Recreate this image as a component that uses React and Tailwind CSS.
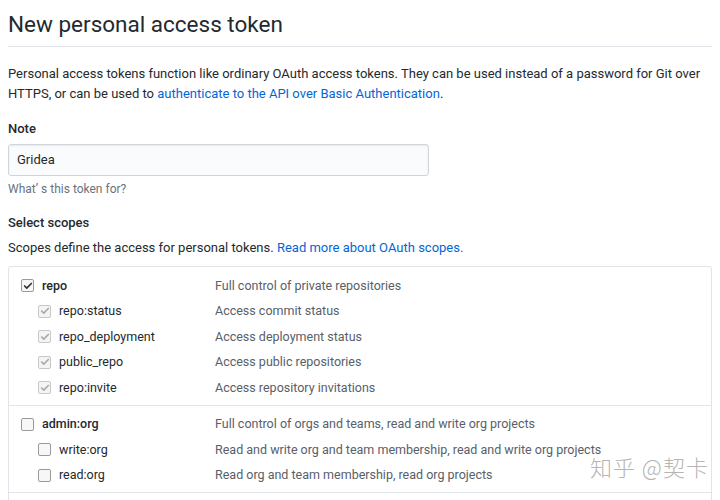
import { Check } from "lucide-react";

const scopeGroups = [
  {
    name: "repo",
    desc: "Full control of private repositories",
    checked: true,
    children: [
      { name: "repo:status", desc: "Access commit status" },
      { name: "repo_deployment", desc: "Access deployment status" },
      { name: "public_repo", desc: "Access public repositories" },
      { name: "repo:invite", desc: "Access repository invitations" },
    ],
  },
  {
    name: "admin:org",
    desc: "Full control of orgs and teams, read and write org projects",
    checked: false,
    children: [
      { name: "write:org", desc: "Read and write org and team membership, read and write org projects" },
      { name: "read:org", desc: "Read org and team membership, read org projects" },
    ],
  },
];

const Box = ({ checked, disabled }) => (
  <span
    className={`w-[13px] h-[13px] rounded-[2px] border flex items-center justify-center ${
      disabled ? "border-[#c8c8c8] bg-[#f4f4f4]" : "border-[#9a9a9a] bg-[#f7f7f7]"
    }`}
  >
    {checked && (
      <Check
        strokeWidth={4}
        className={`w-[10px] h-[10px] ${disabled ? "text-[#a9a9a9]" : "text-[#333]"}`}
      />
    )}
  </span>
);

const ScopeRow = ({ name, desc, checked, disabled, child }) => (
  <div className="flex items-center h-[25.5px] text-[12.5px]">
    <div className={`flex items-center w-[206px] ${child ? "pl-[29px]" : "pl-[12px]"}`}>
      <Box checked={checked} disabled={disabled} />
      <span className={`ml-[8px] ${child ? "" : "font-medium"} text-[#24292e]`}>{name}</span>
    </div>
    <span className="text-[#586069]">{desc}</span>
  </div>
);

const App = () => {
  return (
    <div
      className="relative w-[720px] h-[500px] overflow-hidden bg-white text-[13px] leading-[20px] text-[#24292e] px-2"
      style={{ fontFamily: 'Roboto, "Noto Sans CJK SC", sans-serif' }}
    >
      {/**header */}
      <h1 className="text-[22.5px] leading-[30px] pt-[9px] pb-[7px] border-b border-[#e1e4e8] text-[#24292e]">
        New personal access token
      </h1>

      <p className="mt-[17px]">
        Personal access tokens function like ordinary OAuth access tokens. They can be used instead of a password for Git over HTTPS, or can be used to{" "}
        <span className="text-[#0366d6]">authenticate to the API over Basic Authentication</span>.
      </p>

      {/**note */}
      <div className="mt-[15px]">
        <div className="font-medium">Note</div>
        <div className="mt-[5px] w-[421px] h-[32px] border border-[#d1d5da] rounded-[3px] bg-[#fafbfc] shadow-[inset_0_1px_2px_rgba(27,31,35,0.075)] px-[8px] flex items-center">
          Gridea
        </div>
        <div className="mt-[5px] text-[12px] leading-[16px] text-[#6a737d]">What’ s this token for?</div>
      </div>

      {/**scopes */}
      <div className="mt-[16px]">
        <div className="font-medium">Select scopes</div>
        <p className="mt-[5px]">
          Scopes define the access for personal tokens.{" "}
          <span className="text-[#0366d6]">Read more about OAuth scopes.</span>
        </p>
        <div className="mt-[8px] border border-[#e1e4e8] rounded-[3px]">
          {scopeGroups.map((group, idx) => (
            <div
              key={`group-${idx}`}
              className={`pt-[6px] pb-[4px] ${idx > 0 ? "border-t border-[#e1e4e8]" : ""}`}
            >
              <ScopeRow name={group.name} desc={group.desc} checked={group.checked} />
              {group.children.map((c) => (
                <ScopeRow
                  key={c.name}
                  name={c.name}
                  desc={c.desc}
                  checked={group.checked}
                  disabled={group.checked}
                  child
                />
              ))}
            </div>
          ))}
          <div className="border-t border-[#e1e4e8] h-[20px]" />
        </div>
      </div>

      {/**watermark */}
      <div
        className="absolute left-[590px] top-[452px] text-[22px] leading-[28px] text-[#b5b5b5] tracking-[1px] font-light"
        style={{ fontFamily: '"Noto Sans CJK SC", sans-serif' }}
      >
        知乎 @契卡
      </div>
    </div>
  );
};

export default App;
